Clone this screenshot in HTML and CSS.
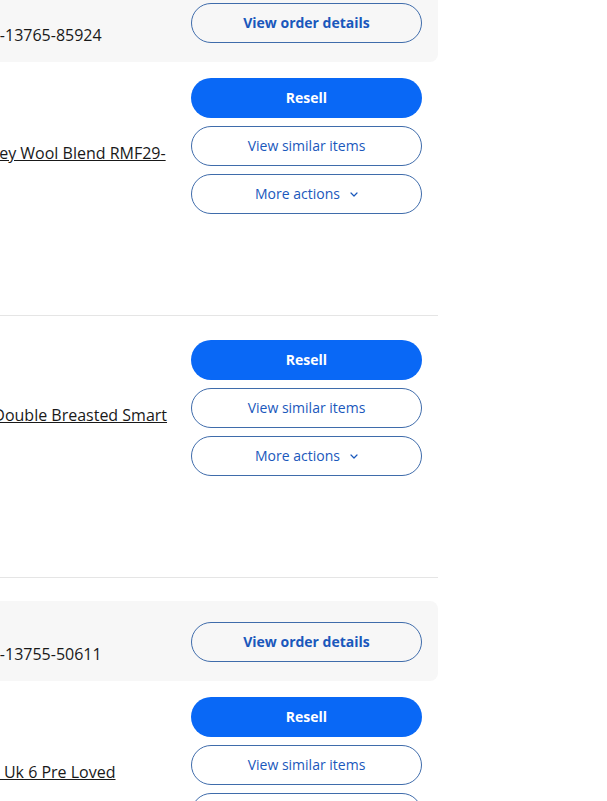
FILE: index.html
```html
<!DOCTYPE html>
<html lang="en">
<head>
<meta charset="utf-8">
<title>Purchase history</title>
<link rel="stylesheet" href="styles.css">
</head>
<body>
<main class="orders">
  <section class="order">
    <div class="order-card">
      <div class="order-info">
        <p>3 Mar 2024</p>
        <p><span class="order-label">Order number:</span> 05-13765-85924</p>
      </div>
      <a class="btn btn-secondary btn-strong" href="#">View order details</a>
    </div>
    <article class="item">
      <div class="item-details">
        <p class="item-status">Delivered</p>
        <p class="item-meta">Qty: 1</p>
        <a class="item-title" href="#">Mens Smart Fit Grey Wool Blend RMF29-JKT 40R</a>
        <p class="item-price">£24.99</p>
      </div>
      <div class="item-actions">
        <a class="btn btn-primary" href="#">Resell</a>
        <a class="btn btn-secondary" href="#">View similar items</a>
        <a class="btn btn-secondary" href="#">More actions <svg class="chevron" viewBox="0 0 8 5" width="8" height="5" aria-hidden="true"><path d="M1 1l3 3 3-3" fill="none" stroke="currentColor" stroke-width="1.2" stroke-linecap="round" stroke-linejoin="round"/></svg></a>
      </div>
    </article>
    <article class="item">
      <div class="item-details">
        <p class="item-status">Delivered</p>
        <p class="item-meta">Qty: 1</p>
        <a class="item-title" href="#">Mens Navy Wool Double Breasted Smart Blazer 40R</a>
        <p class="item-price">£32.00</p>
      </div>
      <div class="item-actions">
        <a class="btn btn-primary" href="#">Resell</a>
        <a class="btn btn-secondary" href="#">View similar items</a>
        <a class="btn btn-secondary" href="#">More actions <svg class="chevron" viewBox="0 0 8 5" width="8" height="5" aria-hidden="true"><path d="M1 1l3 3 3-3" fill="none" stroke="currentColor" stroke-width="1.2" stroke-linecap="round" stroke-linejoin="round"/></svg></a>
      </div>
    </article>
  </section>
  <section class="order">
    <div class="order-card">
      <div class="order-info">
        <p>1 Mar 2024</p>
        <p><span class="order-label">Order number:</span> 05-13755-50611</p>
      </div>
      <a class="btn btn-secondary btn-strong" href="#">View order details</a>
    </div>
    <article class="item">
      <div class="item-details">
        <p class="item-status">Delivered</p>
        <p class="item-meta">Qty: 1</p>
        <a class="item-title" href="#">Black Sandals Size Uk 6 Pre Loved Designer</a>
        <p class="item-price">£18.50</p>
      </div>
      <div class="item-actions">
        <a class="btn btn-primary" href="#">Resell</a>
        <a class="btn btn-secondary" href="#">View similar items</a>
        <a class="btn btn-secondary" href="#">More actions <svg class="chevron" viewBox="0 0 8 5" width="8" height="5" aria-hidden="true"><path d="M1 1l3 3 3-3" fill="none" stroke="currentColor" stroke-width="1.2" stroke-linecap="round" stroke-linejoin="round"/></svg></a>
      </div>
    </article>
  </section>
</main>
</body>
</html>
```
FILE: styles.css
```css
* { box-sizing: border-box; }

html, body {
  margin: 0;
  padding: 0;
}

body {
  background: #fff;
  color: #191919;
  font-family: "Open Sans", "Liberation Sans", sans-serif;
  overflow: hidden;
}

p { margin: 0; }

/* page is shown scrolled: its left part lies outside the window */
.orders {
  width: 589px;
  margin: -18px 0 0 -151px;
}

.order + .order { margin-top: 23px; }

.order-card {
  display: flex;
  align-items: center;
  gap: 16px;
  padding: 17px 16px 15px;
  background: #f7f7f7;
  border-radius: 8px;
}

.order-info {
  flex: 1;
  min-width: 0;
  font-size: 16px;
  line-height: 24px;
}

.btn {
  flex: none;
  display: flex;
  align-items: center;
  justify-content: center;
  width: 231px;
  height: 40px;
  border: 1px solid transparent;
  border-radius: 20px;
  font-size: 14px;
  line-height: 20px;
  text-decoration: none;
}

.btn-primary {
  background: #0968f6;
  color: #fff;
  font-weight: 700;
}

.btn-secondary {
  background: transparent;
  border-color: #3f6cab;
  color: #1a58bc;
}

.btn-strong { font-weight: 700; }

.chevron {
  margin-left: 10px;
}

.item {
  display: flex;
  gap: 16px;
  padding: 16px 16px 24px;
  border-bottom: 1px solid #e5e5e5;
}

.item + .item { padding-top: 24px; }

.item-details {
  flex: 1;
  min-width: 0;
  min-height: 213px;
  font-size: 16px;
  line-height: 24px;
}

.item-status {
  font-weight: 700;
}

.item-meta {
  margin: 4px 0 15px;
  font-size: 14px;
  line-height: 20px;
  color: #707070;
}

.item-title {
  display: block;
  color: #191919;
  text-decoration: underline;
}

.item-price {
  margin-top: 8px;
  font-weight: 700;
}

.item-actions {
  flex: none;
  display: flex;
  flex-direction: column;
  gap: 8px;
}
```
